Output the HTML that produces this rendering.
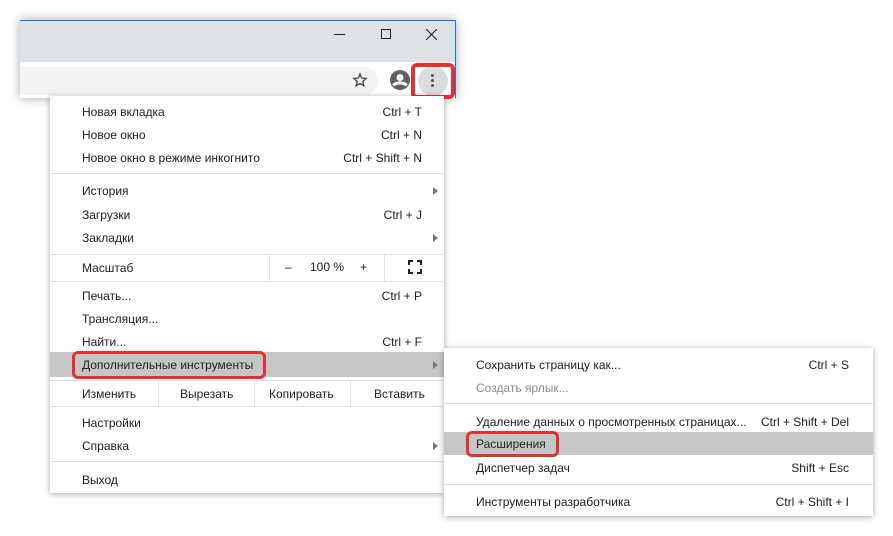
<!DOCTYPE html>
<html><head><meta charset="utf-8"><style>
*{margin:0;padding:0;box-sizing:border-box}
body{width:893px;height:536px;background:#fff;position:relative;overflow:hidden;font-family:"Liberation Sans",sans-serif;font-size:12px;color:#202124}
.a{position:absolute;white-space:nowrap;line-height:16px}
.r{position:absolute;white-space:nowrap;line-height:16px;text-align:right}
.h{position:absolute;background:#e0e0e0;height:1px}
.v{position:absolute;background:#e0e0e0;width:1px}
.tri{position:absolute;width:0;height:0;border-left:5px solid #777;border-top:4px solid transparent;border-bottom:4px solid transparent}
.red{position:absolute;border:3px solid #e0332b;border-radius:6px}
</style></head><body>
<!-- window -->
<div style="position:absolute;left:20px;top:20px;width:436px;height:78px;box-shadow:0 0 10px rgba(0,0,0,.35);background:#dee1e6;border-top:1px solid #1a73e8;border-right:1px solid #1a73e8"></div>
<div style="position:absolute;left:20px;top:62px;width:435px;height:36px;background:#fff"></div>
<div style="position:absolute;left:20px;top:67px;width:358px;height:28px;background:#f1f3f4;border-radius:0 14px 14px 0"></div>
<div style="position:absolute;left:334px;top:34px;width:11px;height:1px;background:#222"></div>
<div style="position:absolute;left:381px;top:29px;width:10px;height:10px;border:1px solid #222"></div>
<svg style="position:absolute;left:426px;top:29px" width="11" height="11"><path d="M0 0L11 11M11 0L0 11" stroke="#222" stroke-width="1.1"/></svg>
<svg style="position:absolute;left:352px;top:72px" width="16" height="16" viewBox="0 0 24 24"><path d="M12 3l2.6 6.2 6.7.5-5.1 4.4 1.6 6.5L12 17.1 6.2 20.6l1.6-6.5L2.7 9.7l6.7-.5z" fill="none" stroke="#444" stroke-width="2"/></svg>
<svg style="position:absolute;left:390px;top:70px" width="20" height="20" viewBox="0 0 20 20"><circle cx="10" cy="10" r="10" fill="#5f6368"/><circle cx="10" cy="7.5" r="3.5" fill="#fff"/><path d="M3.5 15.5c2-3.5 11-3.5 13 0" stroke="#fff" stroke-width="3" fill="none"/></svg>
<div style="position:absolute;left:418px;top:66px;width:30px;height:30px;border-radius:50%;background:#dadce0"></div>
<div style="position:absolute;left:431px;top:74px;width:3px;height:3px;border-radius:50%;background:#555;box-shadow:0 5px 0 #555,0 10px 0 #555"></div>
<div class="red" style="left:411px;top:63px;width:44px;height:36px;border-width:4px"></div>
<!-- main menu -->
<div style="position:absolute;left:50px;top:96px;width:394px;height:397px;background:#fff;box-shadow:0 1px 6px rgba(0,0,0,.35)"></div>
<div class="a" style="left:82px;top:104px">Новая вкладка</div><div class="r" style="right:471px;top:104px">Ctrl + T</div>
<div class="a" style="left:82px;top:127px">Новое окно</div><div class="r" style="right:471px;top:127px">Ctrl + N</div>
<div class="a" style="left:82px;top:150px">Новое окно в режиме инкогнито</div><div class="r" style="right:471px;top:150px">Ctrl + Shift + N</div>
<div class="h" style="left:51px;top:173px;width:392px"></div>
<div class="a" style="left:82px;top:183px">История</div><div class="tri" style="left:433px;top:187px"></div>
<div class="a" style="left:82px;top:207px">Загрузки</div><div class="r" style="right:471px;top:207px">Ctrl + J</div>
<div class="a" style="left:82px;top:230px">Закладки</div><div class="tri" style="left:433px;top:234px"></div>
<div class="h" style="left:51px;top:254px;width:392px"></div>
<div class="a" style="left:82px;top:260px">Масштаб</div>
<div class="v" style="left:269px;top:254px;height:27px"></div><div class="v" style="left:384px;top:254px;height:27px"></div>
<div class="a" style="left:285px;top:259px">–</div><div class="a" style="left:310px;top:259px">100 %</div><div class="a" style="left:360px;top:259px">+</div>
<svg style="position:absolute;left:408px;top:260px" width="14" height="14"><path d="M1 5V1h4M9 1h4v4M13 9v4H9M5 13H1V9" fill="none" stroke="#222" stroke-width="2"/></svg>
<div class="h" style="left:51px;top:281px;width:392px"></div>
<div class="a" style="left:82px;top:288px">Печать...</div><div class="r" style="right:471px;top:288px">Ctrl + P</div>
<div class="a" style="left:82px;top:311px">Трансляция...</div>
<div class="a" style="left:82px;top:334px">Найти...</div><div class="r" style="right:471px;top:334px">Ctrl + F</div>
<div style="position:absolute;left:50px;top:352px;width:394px;height:25px;background:#c6c6c6"></div>
<div class="a" style="left:82px;top:357px">Дополнительные инструменты</div><div class="tri" style="left:433px;top:361px"></div>
<div class="red" style="left:72px;top:351px;width:194px;height:28px"></div>
<div class="h" style="left:51px;top:380px;width:392px"></div>
<div class="a" style="left:82px;top:386px">Изменить</div>
<div class="v" style="left:158px;top:380px;height:26px"></div><div class="v" style="left:254px;top:380px;height:26px"></div><div class="v" style="left:350px;top:380px;height:26px"></div>
<div class="a" style="left:180px;top:386px">Вырезать</div><div class="a" style="left:269px;top:386px">Копировать</div><div class="a" style="left:374px;top:386px">Вставить</div>
<div class="h" style="left:51px;top:406px;width:392px"></div>
<div class="a" style="left:82px;top:415px">Настройки</div>
<div class="a" style="left:82px;top:438px">Справка</div><div class="tri" style="left:433px;top:442px"></div>
<div class="h" style="left:51px;top:461px;width:392px"></div>
<div class="a" style="left:82px;top:472px">Выход</div>
<!-- submenu -->
<div style="position:absolute;left:444px;top:348px;width:429px;height:168px;background:#fff;box-shadow:0 1px 6px rgba(0,0,0,.35)"></div>
<div class="a" style="left:476px;top:357px">Сохранить страницу как...</div><div class="r" style="right:44px;top:357px">Ctrl + S</div>
<div class="a" style="left:476px;top:380px;color:#8a8a8a">Создать ярлык...</div>
<div class="h" style="left:444px;top:403px;width:429px"></div>
<div class="a" style="left:476px;top:414px">Удаление данных о просмотренных страницах...</div><div class="r" style="right:44px;top:414px">Ctrl + Shift + Del</div>
<div style="position:absolute;left:444px;top:432px;width:429px;height:23px;background:#c6c6c6"></div>
<div class="a" style="left:476px;top:436px">Расширения</div>
<div class="red" style="left:466px;top:431px;width:93px;height:26px"></div>
<div class="a" style="left:476px;top:460px">Диспетчер задач</div><div class="r" style="right:44px;top:460px">Shift + Esc</div>
<div class="h" style="left:444px;top:484px;width:429px"></div>
<div class="a" style="left:476px;top:494px">Инструменты разработчика</div><div class="r" style="right:44px;top:494px">Ctrl + Shift + I</div>
</body></html>
